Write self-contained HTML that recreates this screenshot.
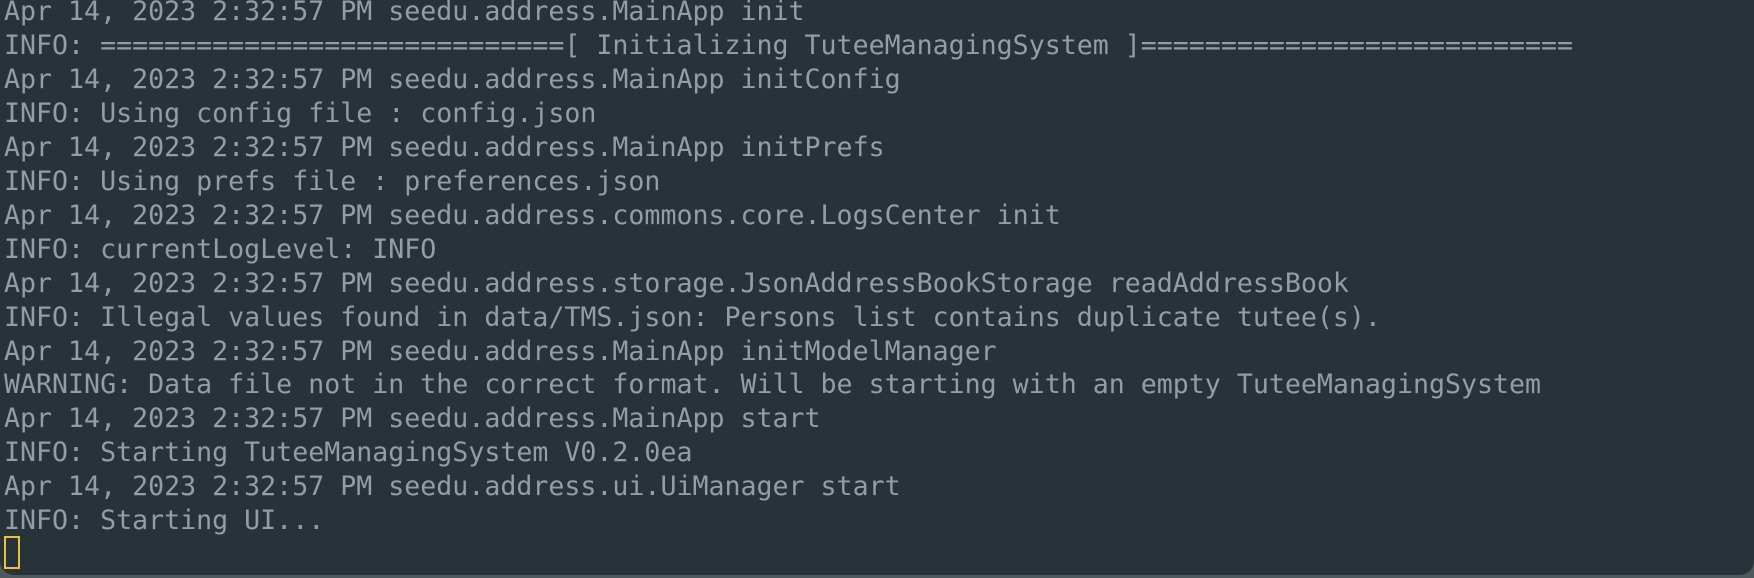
<!DOCTYPE html>
<html><head><meta charset="utf-8"><style>
html,body{margin:0;padding:0;}
body{width:1754px;height:578px;background:#4e585d;overflow:hidden;position:relative;}
.win{position:absolute;left:0;top:0;width:1754px;height:575px;background:#283339;border-bottom-left-radius:14px;border-bottom-right-radius:14px;overflow:hidden;}
pre{margin:-5px 0 0 0;padding:0 0 0 4px;font-family:"DejaVu Sans Mono","Liberation Mono",monospace;font-size:26.6px;line-height:33.95px;color:#919fa4;white-space:pre;}
.cur{position:absolute;left:4px;top:536px;width:12px;height:29px;border:2px solid #e8c23a;}
</style></head><body>
<div class="win">
<pre>Apr 14, 2023 2:32:57 PM seedu.address.MainApp init
INFO: =============================[ Initializing TuteeManagingSystem ]===========================
Apr 14, 2023 2:32:57 PM seedu.address.MainApp initConfig
INFO: Using config file : config.json
Apr 14, 2023 2:32:57 PM seedu.address.MainApp initPrefs
INFO: Using prefs file : preferences.json
Apr 14, 2023 2:32:57 PM seedu.address.commons.core.LogsCenter init
INFO: currentLogLevel: INFO
Apr 14, 2023 2:32:57 PM seedu.address.storage.JsonAddressBookStorage readAddressBook
INFO: Illegal values found in data/TMS.json: Persons list contains duplicate tutee(s).
Apr 14, 2023 2:32:57 PM seedu.address.MainApp initModelManager
WARNING: Data file not in the correct format. Will be starting with an empty TuteeManagingSystem
Apr 14, 2023 2:32:57 PM seedu.address.MainApp start
INFO: Starting TuteeManagingSystem V0.2.0ea
Apr 14, 2023 2:32:57 PM seedu.address.ui.UiManager start
INFO: Starting UI...</pre>
<div class="cur"></div>
</div>
</body></html>
